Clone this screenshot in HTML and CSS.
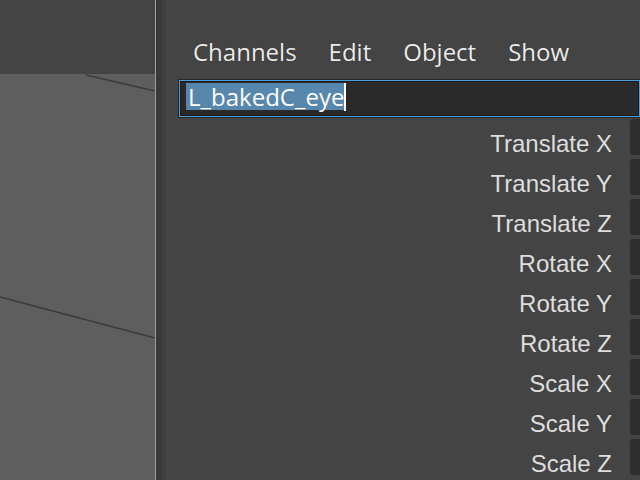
FILE: index.html
```html
<!DOCTYPE html>
<html>
<head>
<meta charset="utf-8">
<link rel="stylesheet" href="styles.css">
</head>
<body>
<div class="app">
  <div class="viewport">
    <svg class="view-svg" width="155" height="480" viewBox="0 0 155 480">
      <rect x="0" y="0" width="155" height="74" fill="#444444"/>
      <rect x="0" y="74" width="155" height="406" fill="#5e5e5e"/>
      <line x1="86" y1="75" x2="155" y2="91" stroke="#3a3a3a" stroke-width="1.3"/>
      <line x1="0" y1="297" x2="155" y2="338" stroke="#3a3a3a" stroke-width="1.3"/>
    </svg>
  </div>
  <div class="splitter"></div>
  <div class="panel">
    <div class="menu">
      <span class="menu-item">Channels</span>
      <span class="menu-item">Edit</span>
      <span class="menu-item">Object</span>
      <span class="menu-item">Show</span>
    </div>
    <div class="name-field"><span class="sel">L_bakedC_eye</span><span class="caret"></span></div>
    <div class="attrs">
      <div class="row"><div class="label">Translate X</div><div class="box"></div></div>
      <div class="row"><div class="label">Translate Y</div><div class="box"></div></div>
      <div class="row"><div class="label">Translate Z</div><div class="box"></div></div>
      <div class="row"><div class="label">Rotate X</div><div class="box"></div></div>
      <div class="row"><div class="label">Rotate Y</div><div class="box"></div></div>
      <div class="row"><div class="label">Rotate Z</div><div class="box"></div></div>
      <div class="row"><div class="label">Scale X</div><div class="box"></div></div>
      <div class="row"><div class="label">Scale Y</div><div class="box"></div></div>
      <div class="row"><div class="label">Scale Z</div><div class="box"></div></div>
    </div>
  </div>
</div>
</body>
</html>
```
FILE: styles.css
```css
html, body {
  margin: 0;
  padding: 0;
  width: 640px;
  height: 480px;
  overflow: hidden;
  background: #444444;
}
.app {
  display: flex;
  width: 640px;
  height: 480px;
}
.viewport {
  width: 155px;
  flex: none;
  height: 480px;
}
.view-svg {
  display: block;
}
.splitter {
  width: 11px;
  flex: none;
  height: 480px;
  box-sizing: border-box;
  border-left: 1px solid #a2a2a2;
  background: #3a3a3a;
  box-shadow: inset 1px 0 0 #333333, inset -4px 0 0 #3f3f3f;
}
.panel {
  flex: 1;
  min-width: 0;
  overflow: hidden;
  background: #444444;
}
.menu {
  display: flex;
  gap: 32px;
  height: 80px;
  box-sizing: border-box;
  padding: 35px 0 0 27px;
  font-family: "Open Sans", "Noto Sans", sans-serif;
  font-size: 24px;
  line-height: 33px;
  color: #ececec;
}
.menu-item {
  text-shadow: 0 0 1px rgba(0,0,0,0.6);
}
.name-field {
  margin-left: 13px;
  height: 37px;
  box-sizing: border-box;
  border: 1px solid #4a9edb;
  background: #2a2a2a;
  box-shadow: inset 0 0 0 1px #1c1c1c, 0 0 0 1px #2c2620;
  display: flex;
  align-items: flex-start;
  padding: 2px 0 0 6px;
  font-family: "Open Sans", "Noto Sans", sans-serif;
  font-size: 24px;
  color: #ffffff;
  overflow: visible;
}
.sel {
  background: #5787ad;
  height: 27px;
  line-height: 27px;
  padding: 0 0 0 2px;
  white-space: nowrap;
}
.caret {
  width: 2px;
  height: 28px;
  background: #ffffff;
}
.attrs {
  margin-top: 2px;
  display: flex;
  flex-direction: column;
  gap: 4px;
}
.row {
  display: flex;
  height: 36px;
  gap: 18px;
}
.label {
  flex: 1;
  text-align: right;
  box-sizing: border-box;
  height: 36px;
  padding-top: 14px;
  line-height: 22px;
  font-family: "Liberation Sans", Arial, sans-serif;
  font-size: 24px;
  color: #dedede;
  white-space: nowrap;
}
.box {
  width: 10px;
  flex: none;
  height: 36px;
  background: #2e2e2e;
  border-radius: 3px 0 0 3px;
}
```
